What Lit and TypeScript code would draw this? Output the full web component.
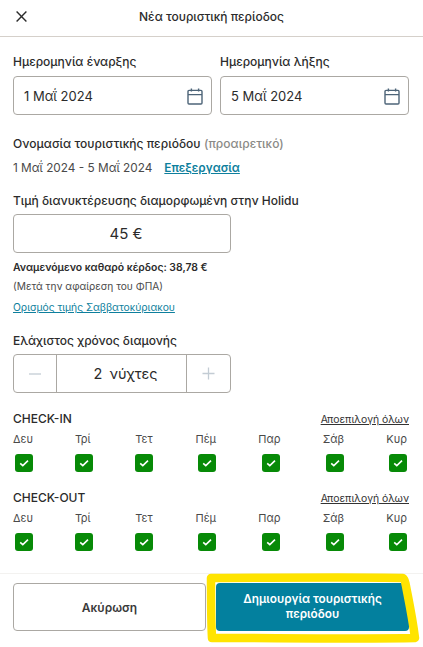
import { LitElement, html, css, svg } from "lit";
import { customElement } from "lit/decorators.js";

const DAYS = ["Δευ", "Τρί", "Τετ", "Πέμ", "Παρ", "Σάβ", "Κυρ"];

const calendarIcon = html`<svg class="cal" width="16" height="17" viewBox="0 0 16 17" fill="none" stroke="#4d6478" stroke-width="1.4">
  <rect x="1" y="2.4" width="14" height="13.6" rx="1"></rect>
  <path d="M1 6.6h14M4.4 .4v3M11.6 .4v3"></path>
</svg>`;

const checkIcon = svg`<path d="M5.2 9.4 7.8 11.7 13 6.7" fill="none" stroke="#fff" stroke-width="1.6" />`;

@customElement("app-root")
export class AppRoot extends LitElement {
  static styles = css`
    :host {
      display: block;
      position: relative;
      width: 423px;
      height: 647px;
      overflow: hidden;
      background: #fff;
      color: #2b2b2b;
      font-family: Inter, "Noto Sans", sans-serif;
      font-size: 13px;
    }

    .header {
      box-sizing: border-box;
      display: flex;
      align-items: flex-start;
      height: 37px;
      border-bottom: 1px solid #d5d0ca;
      padding: 11px 0 0 16px;
    }
    .header__title {
      position: absolute;
      left: 0;
      right: 0;
      top: 9px;
      text-align: center;
      font-size: 12px;
      font-weight: 500;
      line-height: 16px;
    }

    .body {
      padding: 17px 14px 0 13px;
    }

    .label {
      font-size: 12px;
      font-weight: 500;
      line-height: 16px;
    }

    .dates {
      display: grid;
      grid-template-columns: 199px 189px;
      gap: 8px;
    }
    .date-input {
      display: flex;
      align-items: center;
      justify-content: space-between;
      height: 37px;
      margin-top: 6px;
      padding: 0 8px 0 10px;
      border: 1px solid #aba8a3;
      border-radius: 4px;
      font-size: 13px;
    }
    .cal {
      flex: none;
      margin-top: 1px;
    }

    .name {
      margin-top: 21px;
      letter-spacing: 0.05px;
    }
    .muted {
      color: #8a8a86;
    }
    .range {
      display: flex;
      gap: 12px;
      margin-top: 8px;
      font-size: 11.8px;
      line-height: 16px;
      color: #4a4a4a;
    }
    .range a {
      color: #0e7f9d;
      font-weight: 600;
      text-decoration: underline;
    }

    .price-label {
      margin-top: 17px;
    }
    .box {
      box-sizing: border-box;
      width: 218px;
      height: 39px;
      margin-top: 5px;
      padding-left: 8px;
      border: 1px solid #aba8a3;
      border-radius: 4px;
      display: flex;
      align-items: center;
      justify-content: center;
      font-size: 15px;
    }
    .profit {
      margin-top: 7px;
      font-size: 10.4px;
      font-weight: 600;
      line-height: 16px;
    }
    .vat {
      margin-top: 2px;
      font-size: 10.2px;
      line-height: 16px;
      color: #4a4a4a;
    }
    .weekend {
      display: block;
      margin-top: 5px;
      font-size: 10.3px;
      line-height: 16px;
      color: #0e7f9d;
      text-decoration: underline;
    }

    .stay-label {
      margin-top: 18px;
    }
    .stepper {
      display: grid;
      grid-template-columns: 42px 1fr 43px;
      align-items: stretch;
      padding-left: 0;
    }
    .stepper__btn {
      display: flex;
      align-items: center;
      justify-content: center;
    }
    .stepper__value {
      box-sizing: border-box;
      display: flex;
      align-items: center;
      justify-content: center;
      padding-left: 8px;
      border: solid #aba8a3;
      border-width: 0 1px;
      font-size: 14.5px;
      word-spacing: 3px;
    }

    .days-head {
      display: flex;
      align-items: baseline;
      justify-content: space-between;
      margin-top: 18px;
      font-size: 12px;
      font-weight: 500;
      line-height: 16px;
    }
    .days-head a {
      font-size: 10.4px;
      font-weight: 400;
      color: #333;
      text-decoration: underline;
    }
    .days {
      display: flex;
      justify-content: space-between;
      margin-top: 3px;
      padding-right: 2px;
    }
    .day {
      display: flex;
      flex-direction: column;
      align-items: flex-start;
      gap: 7px;
      font-size: 11px;
      line-height: 16px;
      color: #4a4a4a;
    }
    .check {
      display: block;
      align-self: flex-end;
      width: 18px;
      height: 18px;
      background: #078a07;
      border-radius: 3px;
    }
    .check svg {
      display: block;
      width: 18px;
      height: 18px;
    }

    .footer {
      position: absolute;
      left: 0;
      right: 0;
      top: 573px;
      display: grid;
      grid-template-columns: 193px 193px;
      gap: 10px;
      padding: 9px 14px 0 13px;
      border-top: 1px solid #f3f2f0;
    }
    .btn {
      box-sizing: border-box;
      display: flex;
      align-items: center;
      justify-content: center;
      height: 48px;
      border-radius: 4px;
      font-size: 12px;
      font-weight: 600;
      line-height: 15px;
      text-align: center;
    }
    .btn--cancel {
      border: 1px solid #aba8a3;
      color: #3a3a3a;
    }
    .btn--create {
      padding: 0 20px;
      background: #03809e;
      color: #fff;
      font-size: 11.8px;
    }

    .marker {
      position: absolute;
      left: 0;
      top: 0;
      pointer-events: none;
    }
  `;

  private renderDays(name: string) {
    return html`
      <div class="days-head">
        <span>${name}</span>
        <a>Αποεπιλογή όλων</a>
      </div>
      <div class="days">
        ${DAYS.map(
          (d) => html`<div class="day">
            <span>${d}</span>
            <span class="check"><svg viewBox="0 0 18 18">${checkIcon}</svg></span>
          </div>`
        )}
      </div>
    `;
  }

  render() {
    return html`
      <div class="header">
        <svg width="11" height="11" viewBox="0 0 11 11" fill="none" stroke="#2b2b2b" stroke-width="1.4">
          <path d="M.6.6l9.8 9.8M10.4.6.6 10.4"></path>
        </svg>
        <div class="header__title">Νέα τουριστική περίοδος</div>
      </div>

      <div class="body">
        <div class="dates">
          <div>
            <div class="label">Ημερομηνία έναρξης</div>
            <div class="date-input"><span>1 Μαΐ 2024</span>${calendarIcon}</div>
          </div>
          <div>
            <div class="label">Ημερομηνία λήξης</div>
            <div class="date-input"><span>5 Μαΐ 2024</span>${calendarIcon}</div>
          </div>
        </div>

        <div class="label name">Ονομασία τουριστικής περιόδου <span class="muted">(προαιρετικό)</span></div>
        <div class="range"><span>1 Μαΐ 2024 - 5 Μαΐ 2024</span><a>Επεξεργασία</a></div>

        <div class="label price-label">Τιμή διανυκτέρευσης διαμορφωμένη στην Holidu</div>
        <div class="box">45 €</div>
        <div class="profit">Αναμενόμενο καθαρό κέρδος: 38,78 €</div>
        <div class="vat">(Μετά την αφαίρεση του ΦΠΑ)</div>
        <a class="weekend">Ορισμός τιμής Σαββατοκύριακου</a>

        <div class="label stay-label">Ελάχιστος χρόνος διαμονής</div>
        <div class="box stepper">
          <div class="stepper__btn">
            <svg width="12" height="12" viewBox="0 0 12 12" stroke="#c3ccd4" stroke-width="1.3"><path d="M0 6h12"></path></svg>
          </div>
          <div class="stepper__value">2 νύχτες</div>
          <div class="stepper__btn">
            <svg width="13" height="13" viewBox="0 0 13 13" stroke="#c3ccd4" stroke-width="1.3"><path d="M.5 6.5h12M6.5.5v12"></path></svg>
          </div>
        </div>

        ${this.renderDays("CHECK-IN")}
        ${this.renderDays("CHECK-OUT")}
      </div>

      <div class="footer">
        <div class="btn btn--cancel">Ακύρωση</div>
        <div class="btn btn--create">Δημιουργία τουριστικής περιόδου</div>
      </div>

      <svg class="marker" width="423" height="647" fill="none" stroke="#ffe400" stroke-width="8.5" stroke-linejoin="round" stroke-linecap="round">
        <path d="M211 578C260 578 350 577 403 578C405 579 405 582 406 586C408 597 412 615 415 638C370 639 270 638 212 638C211 620 211 595 211 578Z"></path>
      </svg>
    `;
  }
}
